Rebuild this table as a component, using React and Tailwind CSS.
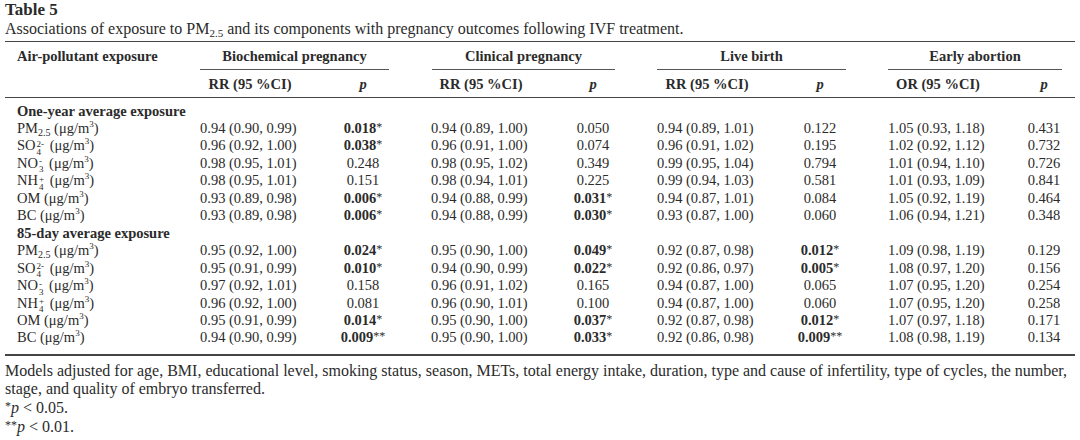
import React from 'react';

// Stacked super/sub script (e.g. SO4 with 2- charge)
function Ion({ sup, sub }) {
  return (
    <span className="inline-flex flex-col align-middle text-[9px] leading-[8px] ml-[1px] mr-[2px] translate-y-[1px]">
      <span>{sup}</span>
      <span>{sub}</span>
    </span>
  );
}

function Unit() {
  return (
    <span>
      {' '}(μg/m<span className="relative -top-[6px] text-[9px]">3</span>)
    </span>
  );
}

function Sub25({ size = 'text-[10px]' }) {
  return <span className={`relative top-[3px] ${size}`}>2.5</span>;
}

function Pollutant({ name }) {
  if (name === 'PM') return (<span>PM<Sub25 /><Unit /></span>);
  if (name === 'SO') return (<span>SO<Ion sup="2-" sub="4" /><Unit /></span>);
  if (name === 'NO') return (<span>NO<Ion sup="-" sub="3" /><Unit /></span>);
  if (name === 'NH') return (<span>NH<Ion sup="+" sub="4" /><Unit /></span>);
  return (<span>{name}<Unit /></span>);
}

function P({ v }) {
  // "0.018*" -> bold digits, lighter stars
  const m = v.match(/^([0-9.]+)(\**)$/);
  if (m[2]) {
    return (
      <span>
        <b className="font-bold">{m[1]}</b>
        <span className="relative -top-[2px] text-[12px]">{m[2]}</span>
      </span>
    );
  }
  return <span>{v}</span>;
}

const grid = 'grid grid-cols-[195px_100px_126px_105px_124px_102px_126px_130px_62px]';

function Row({ r }) {
  return (
    <div className={`${grid} h-[17.4px] leading-[17.4px] whitespace-nowrap`}>
      <div className="pl-3"><Pollutant name={r[0]} /></div>
      <div>{r[1]}</div>
      <div className="text-center"><P v={r[2]} /></div>
      <div className="pl-[5px]">{r[3]}</div>
      <div className="text-center"><P v={r[4]} /></div>
      <div className="pl-[2px]">{r[5]}</div>
      <div className="text-center"><P v={r[6]} /></div>
      <div className="pl-[5px]">{r[7]}</div>
      <div className="text-center"><P v={r[8]} /></div>
    </div>
  );
}

const oneYear = [
  ['PM', '0.94 (0.90, 0.99)', '0.018*', '0.94 (0.89, 1.00)', '0.050', '0.94 (0.89, 1.01)', '0.122', '1.05 (0.93, 1.18)', '0.431'],
  ['SO', '0.96 (0.92, 1.00)', '0.038*', '0.96 (0.91, 1.00)', '0.074', '0.96 (0.91, 1.02)', '0.195', '1.02 (0.92, 1.12)', '0.732'],
  ['NO', '0.98 (0.95, 1.01)', '0.248', '0.98 (0.95, 1.02)', '0.349', '0.99 (0.95, 1.04)', '0.794', '1.01 (0.94, 1.10)', '0.726'],
  ['NH', '0.98 (0.95, 1.01)', '0.151', '0.98 (0.94, 1.01)', '0.225', '0.99 (0.94, 1.03)', '0.581', '1.01 (0.93, 1.09)', '0.841'],
  ['OM', '0.93 (0.89, 0.98)', '0.006*', '0.94 (0.88, 0.99)', '0.031*', '0.94 (0.87, 1.01)', '0.084', '1.05 (0.92, 1.19)', '0.464'],
  ['BC', '0.93 (0.89, 0.98)', '0.006*', '0.94 (0.88, 0.99)', '0.030*', '0.93 (0.87, 1.00)', '0.060', '1.06 (0.94, 1.21)', '0.348'],
];

const day85 = [
  ['PM', '0.95 (0.92, 1.00)', '0.024*', '0.95 (0.90, 1.00)', '0.049*', '0.92 (0.87, 0.98)', '0.012*', '1.09 (0.98, 1.19)', '0.129'],
  ['SO', '0.95 (0.91, 0.99)', '0.010*', '0.94 (0.90, 0.99)', '0.022*', '0.92 (0.86, 0.97)', '0.005*', '1.08 (0.97, 1.20)', '0.156'],
  ['NO', '0.97 (0.92, 1.01)', '0.158', '0.96 (0.91, 1.02)', '0.165', '0.94 (0.87, 1.00)', '0.065', '1.07 (0.95, 1.20)', '0.254'],
  ['NH', '0.96 (0.92, 1.00)', '0.081', '0.96 (0.90, 1.01)', '0.100', '0.94 (0.87, 1.00)', '0.060', '1.07 (0.95, 1.20)', '0.258'],
  ['OM', '0.95 (0.91, 0.99)', '0.014*', '0.95 (0.90, 1.00)', '0.037*', '0.92 (0.87, 0.98)', '0.012*', '1.07 (0.97, 1.18)', '0.171'],
  ['BC', '0.94 (0.90, 0.99)', '0.009**', '0.95 (0.90, 1.00)', '0.033*', '0.92 (0.86, 0.98)', '0.009**', '1.08 (0.98, 1.19)', '0.134'],
];

export default function App() {
  return (
    <div className="w-[1080px] h-[440px] bg-white text-[#2b2b2b] text-[14.5px] font-['Liberation_Serif',serif] px-[5px] overflow-hidden">
      <div className="font-bold text-[17px] leading-[20px]">Table 5</div>
      <div className="text-[16px] leading-[18px] whitespace-nowrap">
        Associations of exposure to PM<Sub25 size="text-[11px]" /> and its components with pregnancy outcomes following IVF treatment.
      </div>

      {/* table */}
      <div className="mt-[2px] border-t border-[#444] whitespace-nowrap">
        <div className={`${grid} mt-[2px] font-bold h-[26px] leading-[25px]`}>
          <div className="pl-3">Air-pollutant exposure</div>
          <div className="col-span-2">
            <div className="w-[189px] border-b border-[#555] text-center">Biochemical pregnancy</div>
          </div>
          <div className="col-span-2">
            <div className="ml-[6px] w-[183px] border-b border-[#555] text-center">Clinical pregnancy</div>
          </div>
          <div className="col-span-2">
            <div className="ml-[2px] w-[189px] border-b border-[#555] text-center">Live birth</div>
          </div>
          <div className="col-span-2">
            <div className="ml-[5px] w-[174px] border-b border-[#555] text-center">Early abortion</div>
          </div>
        </div>

        <div className={`${grid} h-[28px] leading-[29px] font-bold border-b border-[#444]`}>
          <div />
          <div className="text-center">RR (95 %CI)</div>
          <div className="text-center italic">p</div>
          <div className="pl-[5px]"><div className="w-[100px] text-center">RR (95 %CI)</div></div>
          <div className="text-center italic">p</div>
          <div className="pl-[2px]"><div className="w-[100px] text-center">RR (95 %CI)</div></div>
          <div className="text-center italic">p</div>
          <div className="pl-[5px]"><div className="w-[100px] text-center">OR (95 %CI)</div></div>
          <div className="text-center italic">p</div>
        </div>

        <div className="pt-[4px] pb-[7px] border-b-2 border-[#444]">
          <div className="pl-3 font-bold h-[18px] leading-[18px]">One-year average exposure</div>
          {oneYear.map((r, i) => <Row key={i} r={r} />)}
          <div className="pl-3 font-bold h-[18px] leading-[18px]">85-day average exposure</div>
          {day85.map((r, i) => <Row key={i} r={r} />)}
        </div>
      </div>

      <div className="text-[16px] leading-[18.5px] mt-[6px] whitespace-nowrap">
        <div>Models adjusted for age, BMI, educational level, smoking status, season, METs, total energy intake, duration, type and cause of infertility, type of cycles, the number,</div>
        <div>stage, and quality of embryo transferred.</div>
        <div><span className="relative -top-[3px] text-[12px]">*</span><i>p</i> &lt; 0.05.</div>
        <div><span className="relative -top-[3px] text-[12px]">**</span><i>p</i> &lt; 0.01.</div>
      </div>
    </div>
  );
}
